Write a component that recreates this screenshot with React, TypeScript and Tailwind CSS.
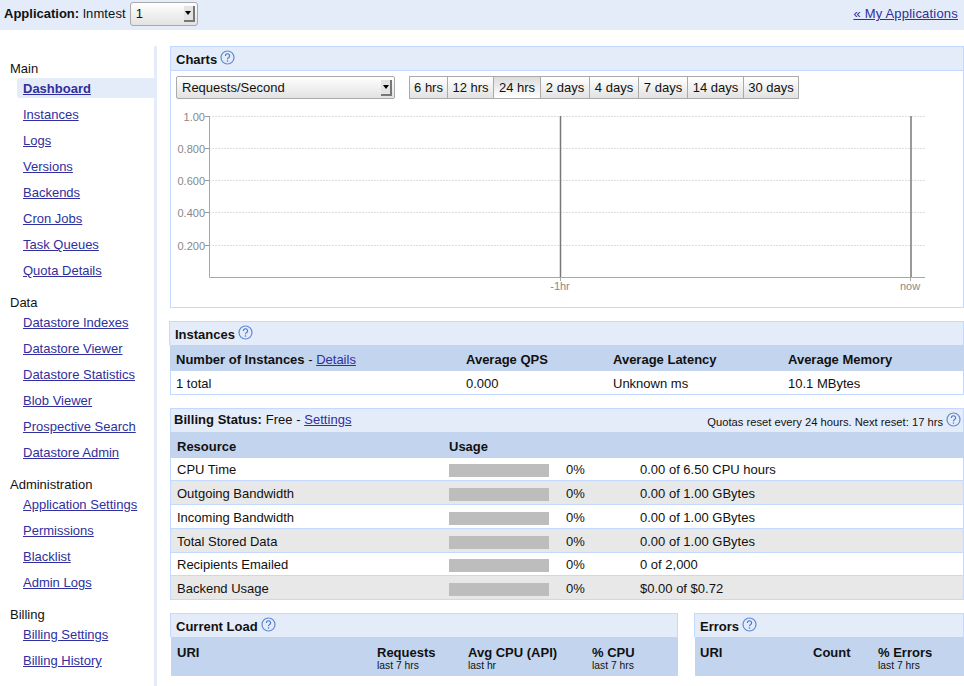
const navGroups = [
  {
    title: "Main",
    items: ["Dashboard", "Instances", "Logs", "Versions", "Backends", "Cron Jobs", "Task Queues", "Quota Details"],
  },
  {
    title: "Data",
    items: ["Datastore Indexes", "Datastore Viewer", "Datastore Statistics", "Blob Viewer", "Prospective Search", "Datastore Admin"],
  },
  {
    title: "Administration",
    items: ["Application Settings", "Permissions", "Blacklist", "Admin Logs"],
  },
  {
    title: "Billing",
    items: ["Billing Settings", "Billing History"],
  },
];

const ranges = [
  { label: "6 hrs", width: "w-[37px]" },
  { label: "12 hrs", width: "w-[46px]" },
  { label: "24 hrs", width: "w-[47px]" },
  { label: "2 days", width: "w-[49px]" },
  { label: "4 days", width: "w-[49px]" },
  { label: "7 days", width: "w-[49px]" },
  { label: "14 days", width: "w-[56px]" },
  { label: "30 days", width: "w-[55px]" },
];

const quotas = [
  { name: "CPU Time", amount: "0.00 of 6.50 CPU hours", height: "h-[23px]" },
  { name: "Outgoing Bandwidth", amount: "0.00 of 1.00 GBytes", height: "h-[24px]" },
  { name: "Incoming Bandwidth", amount: "0.00 of 1.00 GBytes", height: "h-[24px]" },
  { name: "Total Stored Data", amount: "0.00 of 1.00 GBytes", height: "h-[24px]" },
  { name: "Recipients Emailed", amount: "0 of 2,000", height: "h-[23px]" },
  { name: "Backend Usage", amount: "$0.00 of $0.72", height: "h-[24px]" },
];

const Help = () => (
  <svg width="15" height="15" viewBox="0 0 15 15" fill="none" className="-mt-[5px] shrink-0">
    <circle cx="7.5" cy="7.5" r="6.5" stroke="#5f8ad6" strokeWidth="1.2" />
    <path d="M5.4 5.9a2.1 2.1 0 1 1 3.3 1.7c-.8.5-1.2.9-1.2 1.7" stroke="#4a78cc" strokeWidth="1.2" />
    <circle cx="7.5" cy="11" r=".8" fill="#4a78cc" />
  </svg>
);

const SelectArrow = () => (
  <span className="flex h-[16px] w-[11px] items-center justify-center border-r-2 border-b-2 border-[#777] bg-[#e4e4e4]">
    <span className="h-0 w-0 border-x-[3px] border-t-[4px] border-x-transparent border-t-black" />
  </span>
);

const Link = ({ children }: { children: string }) => (
  <a className="text-[#2f2f9e] underline">{children}</a>
);

const Chart = () => {
  const labels = [
    { y: 116, text: "1.00" },
    { y: 148, text: "0.800" },
    { y: 180, text: "0.600" },
    { y: 212, text: "0.400" },
    { y: 245, text: "0.200" },
  ];
  return (
    <svg width="790" height="200" viewBox="171 100 790 200" className="block">
      {labels.map((l) => (
        <g key={l.text}>
          <line x1="206" x2="925" y1={l.y + 0.5} y2={l.y + 0.5} stroke="#dedede" strokeDasharray="2 1" />
          <line x1="205" x2="209" y1={l.y + 0.5} y2={l.y + 0.5} stroke="#999" />
          <text x="205" y={l.y + 4.5} textAnchor="end" fontSize="11" fill="#888" fontFamily="Liberation Sans">
            {l.text}
          </text>
        </g>
      ))}
      <path d="M209.5 116V277.5H925" fill="none" stroke="#a8a8a8" />
      <line x1="560.5" x2="560.5" y1="116" y2="277" stroke="#777" strokeWidth="1.5" />
      <line x1="911" x2="911" y1="116" y2="277" stroke="#999" strokeWidth="2" />
      <line x1="560.5" x2="560.5" y1="277" y2="281" stroke="#a8a8a8" />
      <line x1="910.5" x2="910.5" y1="277" y2="281" stroke="#a8a8a8" />
      <text x="560" y="290" textAnchor="middle" fontSize="11" fill="#888" fontFamily="Liberation Sans">-1hr</text>
      <text x="910" y="290" textAnchor="middle" fontSize="11" fill="#888" fontFamily="Liberation Sans">now</text>
    </svg>
  );
};

const App = () => {
  return (
    <div className="h-[686px] w-[964px] overflow-hidden bg-white font-['Liberation_Sans',Arial,sans-serif] text-[13px] text-[#111]">
      <header className="flex h-[30px] items-start justify-between bg-[#e5ecf9] pr-[6px] pl-[4px]">
        <div className="flex h-[28px] items-center">
          <span className="font-bold">Application:</span>
          <span className="ml-[4px] tracking-[0.1px]">lnmtest</span>
          <div className="ml-[4px] flex h-[24px] w-[68px] items-center justify-between rounded-[3px] border border-[#aaa] bg-gradient-to-b from-white to-[#e2e2e2] pr-[2px] pl-[5px]">
            <span>1</span>
            <SelectArrow />
          </div>
        </div>
        <a className="mt-[4px] tracking-[0.2px] text-[#2f2f9e] underline">« My Applications</a>
      </header>

      <div className="flex">
        <nav className="mt-[16px] h-[640px] w-[157px] shrink-0 border-r-[3px] border-[#e5ecf9] pt-[14px]">
          {navGroups.map((group) => (
            <div key={group.title} className="mb-[14px]">
              <div className="h-[18px] pl-[10px] leading-[18px]">{group.title}</div>
              {group.items.map((item) => (
                <div
                  key={item}
                  className={
                    item === "Dashboard"
                      ? "mb-[6px] ml-[17px] flex h-[20px] items-center rounded-l-[3px] bg-[#e5ecf9] pt-[2px] pl-[6px] font-bold"
                      : "mb-[6px] ml-[17px] flex h-[20px] items-center pt-[2px] pl-[6px]"
                  }
                >
                  <Link>{item}</Link>
                </div>
              ))}
            </div>
          ))}
        </nav>

        <main className="ml-[13px] w-[794px] pt-[16px]">
          <section className="h-[262px] border border-[#c3d9ff]">
            <div className="flex h-[24px] items-center gap-[3px] border-b border-[#c3d9ff] bg-[#e5ecf9] pt-[2px] pl-[5px] font-bold">
              Charts <Help />
            </div>
            <div className="flex h-[29px] items-start pt-[5px] pl-[5px]">
              <div className="flex h-[23px] w-[219px] items-center justify-between rounded-[2px] border border-[#aaa] bg-gradient-to-b from-white to-[#e2e2e2] pr-[2px] pl-[5px]">
                <span>Requests/Second</span>
                <SelectArrow />
              </div>
              <div className="ml-[14px] flex h-[23px] border border-[#aaa] bg-gradient-to-b from-white to-[#e2e2e2]">
                {ranges.map((r, i) => (
                  <span
                    key={r.label}
                    className={`flex items-center justify-center border-l first:border-l-0 border-[#aaa] ${r.width} ${i === 2 ? "bg-gradient-to-b from-[#dcdcdc] to-white" : ""}`}
                  >
                    {r.label}
                  </span>
                ))}
              </div>
            </div>
            <Chart />
          </section>

          <section className="mt-[13px]">
            <div className="-ml-px flex h-[24px] items-center gap-[3px] border border-b-0 border-[#c3d9ff] bg-[#e5ecf9] pt-[2px] pl-[5px] font-bold">
              Instances <Help />
            </div>
            <div className="grid h-[26px] grid-cols-[290px_147px_175px_1fr] items-center bg-[#c3d5ee] pt-[4px] pl-[6px] font-bold">
              <span>
                Number of Instances <span className="font-normal">- <Link>Details</Link></span>
              </span>
              <span>Average QPS</span>
              <span>Average Latency</span>
              <span>Average Memory</span>
            </div>
            <div className="grid h-[24px] grid-cols-[290px_147px_175px_1fr] items-center border border-t-0 border-[#c3d9ff] pt-[2px] pl-[5px]">
              <span>1 total</span>
              <span>0.000</span>
              <span>Unknown ms</span>
              <span>10.1 MBytes</span>
            </div>
          </section>

          <section className="mt-[13px]">
            <div className="flex h-[24px] items-center justify-between border border-b-0 border-[#c3d9ff] bg-[#e5ecf9] pr-[2px] pl-[3px]">
              <span className="-mt-[2px] tracking-[0.04px]">
                <b>Billing Status:</b> Free - <Link>Settings</Link>
              </span>
              <span className="flex items-center gap-[3px] pt-[3px] text-[11.2px]">
                Quotas reset every 24 hours. Next reset: 17 hrs <Help />
              </span>
            </div>
            <div className="grid h-[26px] grid-cols-[272px_1fr] items-center bg-[#c3d5ee] pt-[4px] pl-[7px] font-bold">
              <span>Resource</span>
              <span>Usage</span>
            </div>
            {quotas.map((q, i) => (
              <div
                key={q.name}
                className={`grid grid-cols-[272px_100px_17px_74px_1fr] items-center border-x border-b border-[#c3d9ff] pt-[2px] pl-[6px] ${q.height} ${i % 2 === 1 ? "bg-[#e8e8e8]" : "bg-white"}`}
              >
                <span>{q.name}</span>
                <span className="mt-[1px] h-[13px] bg-[#bdbdbd]" />
                <span />
                <span>0%</span>
                <span>{q.amount}</span>
              </div>
            ))}
          </section>

          <div className="mt-[13px] flex justify-between">
            <section className="w-[508px]">
              <div className="flex h-[24px] items-center gap-[3px] border border-b-0 border-[#c3d9ff] bg-[#e5ecf9] pt-[2px] pl-[5px] font-bold">
                Current Load <Help />
              </div>
              <div className="ml-px grid h-[39px] grid-cols-[200px_91px_124px_1fr] bg-[#c3d5ee] pt-[8px] pl-[6px] leading-[15px]">
                <b>URI</b>
                <div><b>Requests</b><div className="text-[10.3px] leading-[11px]">last 7 hrs</div></div>
                <div><b>Avg CPU (API)</b><div className="text-[10.3px] leading-[11px]">last hr</div></div>
                <div><b>% CPU</b><div className="text-[10.3px] leading-[11px]">last 7 hrs</div></div>
              </div>
            </section>
            <section className="w-[270px]">
              <div className="flex h-[24px] items-center gap-[3px] border border-b-0 border-[#c3d9ff] bg-[#e5ecf9] pt-[2px] pl-[5px] font-bold">
                Errors <Help />
              </div>
              <div className="ml-px grid h-[39px] grid-cols-[113px_65px_1fr] bg-[#c3d5ee] pt-[8px] pl-[5px] leading-[15px]">
                <b>URI</b>
                <b>Count</b>
                <div><b>% Errors</b><div className="text-[10.3px] leading-[11px]">last 7 hrs</div></div>
              </div>
            </section>
          </div>
        </main>
      </div>
    </div>
  );
};

export default App;
